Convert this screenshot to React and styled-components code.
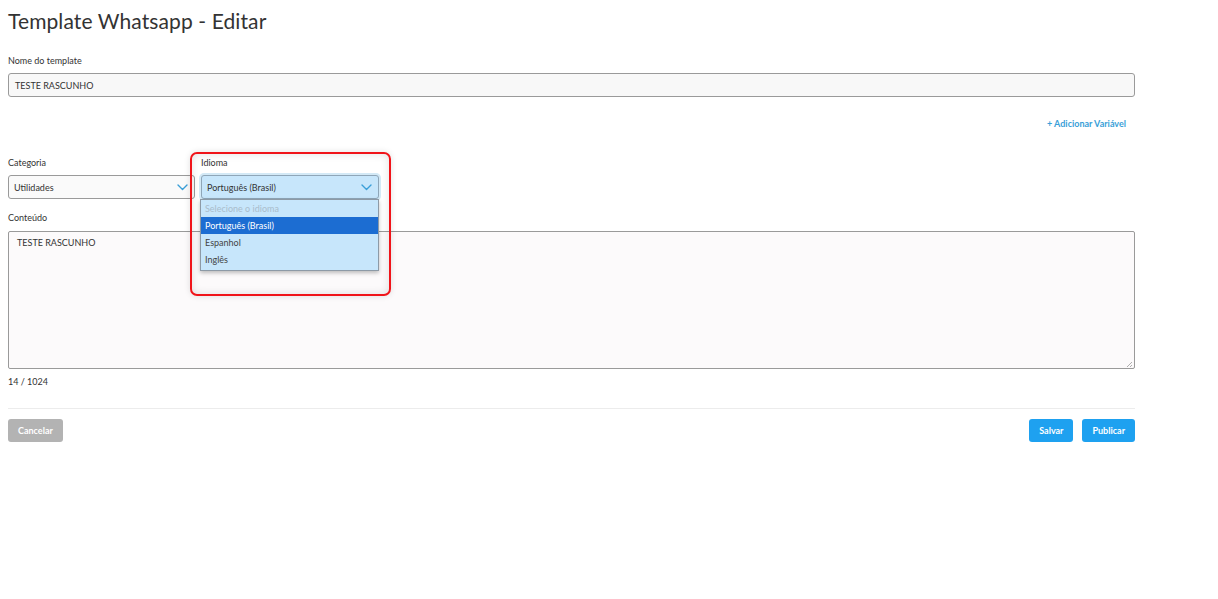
import styled, { createGlobalStyle } from "styled-components";

const GlobalStyle = createGlobalStyle`
  html, body {
    margin: 0;
    padding: 0;
    background: #ffffff;
    font-family: Lato, "Noto Sans", sans-serif;
    color: #333333;
  }
`;

const languages = ["Português (Brasil)", "Espanhol", "Inglês"];

const Chevron = ({ color = "#3a9fd8" }) => (
  <svg width="11" height="7" viewBox="0 0 11 7" fill="none">
    <path
      d="M1 1l4.5 4.5L10 1"
      stroke={color}
      strokeWidth="1.4"
      strokeLinecap="round"
      strokeLinejoin="round"
    />
  </svg>
);

const App = () => {
  return (
    <>
      <GlobalStyle />
      <Page>
        <Title>Template Whatsapp - Editar</Title>

        <Label>Nome do template</Label>
        <TextInput>TESTE RASCUNHO</TextInput>

        <AddVariable>+ Adicionar Variável</AddVariable>

        <SelectRow>
          <Field>
            <Label>Categoria</Label>
            <Select width={187}>
              Utilidades
              <Chevron />
            </Select>
          </Field>
          <Field>
            <Label>Idioma</Label>
            <Select width={178} open>
              Português (Brasil)
              <Chevron />
            </Select>
            <Options>
              <Option placeholder>Selecione o idioma</Option>
              {languages.map((lang, i) => (
                <Option key={lang} selected={i === 0}>
                  {lang}
                </Option>
              ))}
            </Options>
            <Highlight />
          </Field>
        </SelectRow>

        <Label gap={7}>Conteúdo</Label>
        <TextArea>
          TESTE RASCUNHO
          <Grip>
            <svg width="7" height="7" viewBox="0 0 7 7">
              <path d="M6 1L1 6M6 4L4 6" stroke="#9a9a9a" strokeWidth="0.8" />
            </svg>
          </Grip>
        </TextArea>
        <Counter>14 / 1024</Counter>

        <Divider />

        <Actions>
          <Button variant="grey">Cancelar</Button>
          <RightButtons>
            <Button>Salvar</Button>
            <Button>Publicar</Button>
          </RightButtons>
        </Actions>
      </Page>
    </>
  );
};

const Page = styled.div`
  width: 1127px;
  padding: 6px 0 0 8px;
`;

const Title = styled.h1`
  margin: 0 0 19px;
  font-size: 21px;
  line-height: 30px;
  font-weight: 400;
  color: #333333;
  letter-spacing: 0.1px;
`;

const Label = styled.div`
  font-size: 9px;
  line-height: 12px;
  color: #333333;
  margin-bottom: ${({ gap = 6 }) => gap}px;
`;

const TextInput = styled.div`
  box-sizing: border-box;
  height: 24px;
  display: flex;
  align-items: center;
  padding: 0 6px;
  border: 1px solid #9a9a9a;
  border-radius: 3px;
  background: #f8f8f8;
  font-size: 9px;
  color: #333333;
`;

const AddVariable = styled.div`
  margin: 21px 9px 0 0;
  text-align: right;
  font-size: 9px;
  line-height: 12px;
  font-weight: 700;
  color: #3a9fd8;
`;

const SelectRow = styled.div`
  display: flex;
  gap: 6px;
  margin-top: 27px;
  margin-bottom: 13px;
`;

const Field = styled.div`
  position: relative;
  display: flex;
  flex-direction: column;
`;

const Select = styled.div`
  box-sizing: border-box;
  width: ${({ width }) => width}px;
  height: 24px;
  display: flex;
  align-items: center;
  justify-content: space-between;
  padding: 0 6px 0 5px;
  border: 1px solid ${({ open }) => (open ? "#8fa6b8" : "#9a9a9a")};
  border-radius: 3px;
  background: ${({ open }) => (open ? "#c7e6fb" : "#fafafa")};
  box-shadow: ${({ open }) => (open ? "0 0 0 2px #d3e9f6" : "none")};
  font-size: 9px;
  color: #333333;
`;

const Options = styled.div`
  position: absolute;
  top: 42px;
  left: -1px;
  width: 179px;
  box-sizing: border-box;
  border: 1px solid #8d9aa6;
  background: #c7e6fb;
  box-shadow: 0 2px 4px rgba(0, 0, 0, 0.25);
  padding-bottom: 2px;
  z-index: 2;
`;

const Option = styled.div`
  height: 17px;
  display: flex;
  align-items: center;
  padding: 0 4px;
  font-size: 9px;
  color: ${({ selected, placeholder }) =>
    selected ? "#ffffff" : placeholder ? "#a9bccb" : "#444444"};
  background: ${({ selected }) => (selected ? "#1c6dd2" : "transparent")};
`;

const Highlight = styled.div`
  position: absolute;
  top: -5px;
  left: -11px;
  width: 201px;
  height: 144px;
  box-sizing: border-box;
  border: 2px solid #f0141a;
  border-radius: 7px;
  box-shadow: inset 0 0 8px rgba(0, 0, 0, 0.12), 0 0 6px rgba(0, 0, 0, 0.12);
  pointer-events: none;
  z-index: 3;
`;

const TextArea = styled.div`
  position: relative;
  box-sizing: border-box;
  height: 138px;
  padding: 5px 8px;
  border: 1px solid #9a9a9a;
  border-radius: 2px;
  background: #fcfafb;
  font-size: 9px;
  line-height: 12px;
  color: #333333;
`;

const Grip = styled.div`
  position: absolute;
  right: 1px;
  bottom: 0;
  line-height: 0;
`;

const Counter = styled.div`
  margin-top: 7px;
  font-size: 9px;
  line-height: 12px;
  color: #333333;
`;

const Divider = styled.div`
  height: 1px;
  background: #ececec;
  margin-top: 20px;
`;

const Actions = styled.div`
  display: flex;
  justify-content: space-between;
  margin-top: 10px;
`;

const RightButtons = styled.div`
  display: flex;
  gap: 9px;
`;

const Button = styled.button`
  height: 23px;
  padding: 0 10px;
  border: none;
  border-radius: 3px;
  background: ${({ variant }) => (variant === "grey" ? "#b3b3b3" : "#1ea1f0")};
  color: #ffffff;
  font-family: Lato, "Noto Sans", sans-serif;
  font-size: 9px;
  font-weight: 700;
  cursor: pointer;
`;

export default App;
